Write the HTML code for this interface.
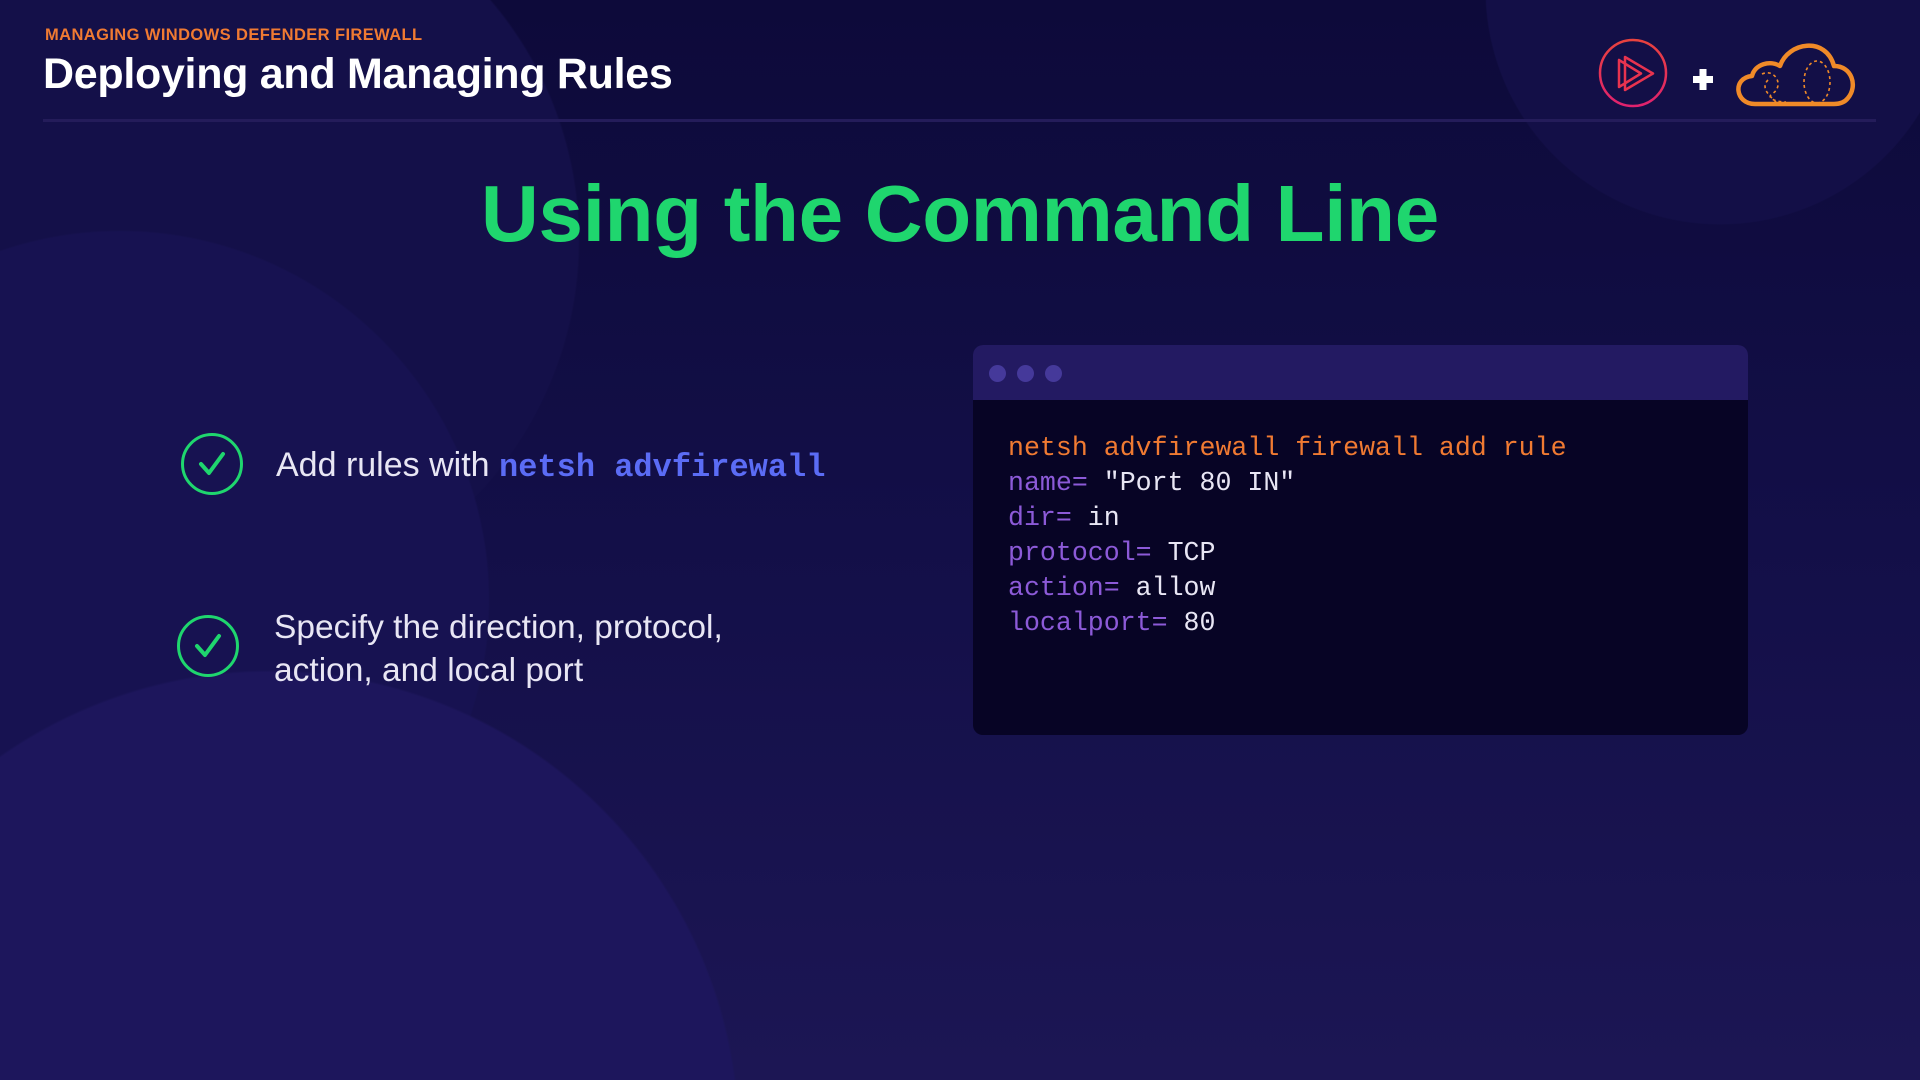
<!DOCTYPE html>
<html style="width:1920px;height:1080px;overflow:hidden;background:#0d0a3a"><head><meta charset="utf-8"><style>
html,body{margin:0;padding:0}
body{width:1920px;height:1080px;overflow:hidden;position:relative;font-family:"Liberation Sans",sans-serif;
background:
radial-gradient(circle 235px at 1720px -10px,#130f47 99.5%,transparent 100%),
radial-gradient(circle 470px at 270px 1140px,#1d165c 99.5%,transparent 100%),
radial-gradient(circle 370px at 120px 600px,#171251 99.5%,transparent 100%),
radial-gradient(circle 370px at 210px 240px,#141049 99.5%,transparent 100%),
linear-gradient(180deg,#0d0a3a 0%,#130f48 50%,#1c1654 100%);}
.c{position:absolute;border-radius:50%}
.mono{font-family:"Liberation Mono",monospace}
</style></head><body>

<div style="position:absolute;left:45px;top:26px;color:#f07a32;font-weight:bold;font-size:16.5px;letter-spacing:0.4px">MANAGING WINDOWS DEFENDER FIREWALL</div>
<div style="position:absolute;left:43px;top:50px;color:#fff;font-weight:bold;font-size:43px;letter-spacing:-0.3px">Deploying and Managing Rules</div>
<div style="position:absolute;left:43px;top:119px;width:1833px;height:3px;background:#241c5a"></div>

<svg style="position:absolute;left:1590px;top:36px" width="280" height="76" viewBox="0 0 280 76">
<defs><linearGradient id="g" x1="0" y1="0" x2="0" y2="1"><stop offset="0" stop-color="#e8423e"/><stop offset="1" stop-color="#e0226e"/></linearGradient></defs>
<circle cx="43" cy="37" r="33" fill="none" stroke="url(#g)" stroke-width="2.5"/>
<path d="M29 24 L29 51 L51 37.5 Z M35 21 L35 54 L63 37.5 Z" fill="none" stroke="#e8334f" stroke-width="2.5" stroke-linejoin="round"/>
<rect x="103" y="40" width="20" height="7" fill="#fff"/><rect x="109.5" y="33" width="7" height="21" fill="#fff"/>
<path d="M165 68 C145 68 142 42 162 40 C165 28 180 24 190 30 C198 6 236 0 244 30 C262 30 268 50 258 62 C255 66 250 68 244 68 Z" fill="none" stroke="#f08a28" stroke-width="4.5" stroke-linejoin="round"/>
<path d="M172 38 C185 32 195 50 182 58 C176 62 186 66 196 66 M178 44 C170 52 180 60 186 66" fill="none" stroke="#f08a28" stroke-width="1.6" stroke-dasharray="3 3"/>
<ellipse cx="227" cy="46" rx="13" ry="21" fill="none" stroke="#f08a28" stroke-width="1.6" stroke-dasharray="3 3"/>
</svg>

<div style="position:absolute;left:0;width:1920px;top:168px;text-align:center;color:#1fd66e;font-weight:bold;font-size:80px;letter-spacing:-0.3px">Using the Command Line</div>

<svg style="position:absolute;left:178px;top:430px" width="68" height="68"><circle cx="34" cy="34" r="29.5" fill="none" stroke="#1fd66e" stroke-width="3"/><path d="M23 34 L31 43 L45 24" fill="none" stroke="#1fd66e" stroke-width="4" stroke-linecap="round" stroke-linejoin="round"/></svg>
<div style="position:absolute;left:276px;top:446px;color:#e8e6f4;font-size:34px">Add rules with <span class="mono" style="color:#5b6cf5;font-weight:bold;font-size:32px">netsh advfirewall</span></div>

<svg style="position:absolute;left:174px;top:612px" width="68" height="68"><circle cx="34" cy="34" r="29.5" fill="none" stroke="#1fd66e" stroke-width="3"/><path d="M23 34 L31 43 L45 24" fill="none" stroke="#1fd66e" stroke-width="4" stroke-linecap="round" stroke-linejoin="round"/></svg>
<div style="position:absolute;left:274px;top:606px;color:#e8e6f4;font-size:33.5px;line-height:43px">Specify the direction, protocol,<br>action, and local port</div>

<div style="position:absolute;left:973px;top:345px;width:775px;height:390px;border-radius:10px;background:#070425;overflow:hidden">
<div style="height:55px;background:#231a62;position:relative">
<div class="c" style="left:16px;top:20px;width:17px;height:17px;background:#45399a"></div>
<div class="c" style="left:44px;top:20px;width:17px;height:17px;background:#45399a"></div>
<div class="c" style="left:72px;top:20px;width:17px;height:17px;background:#45399a"></div>
</div>
<div class="mono" style="position:absolute;left:35px;top:86px;font-size:26.6px;line-height:35px;color:#e8e6f4;white-space:pre"><span style="color:#f07a32">netsh advfirewall firewall add rule</span>
<span style="color:#8c5ad8">name=</span> "Port 80 IN"
<span style="color:#8c5ad8">dir=</span> in
<span style="color:#8c5ad8">protocol=</span> TCP
<span style="color:#8c5ad8">action=</span> allow
<span style="color:#8c5ad8">localport=</span> 80</div>
</div>
</body></html>
